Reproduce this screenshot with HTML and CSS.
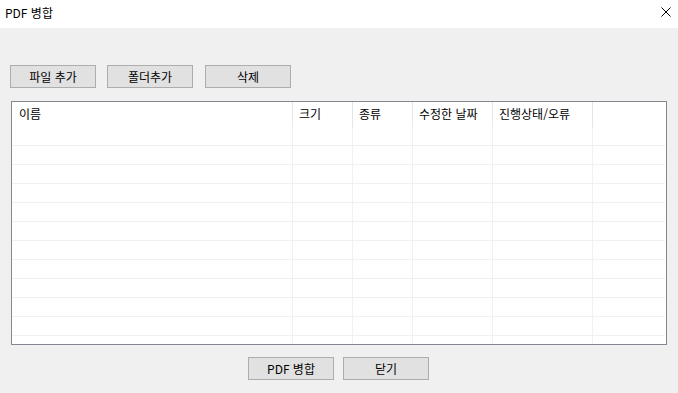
FILE: index.html
```html
<!DOCTYPE html>
<html lang="ko">
<head>
<meta charset="utf-8">
<title>PDF 병합</title>
<link rel="stylesheet" href="styles.css">
</head>
<body>
<div class="window">
  <div class="titlebar">
    <span class="title">PDF 병합</span>
    <span class="close">
      <svg width="10" height="10" viewBox="0 0 10 10"><path d="M0.5 0.5 L9.5 9.5 M9.5 0.5 L0.5 9.5" stroke="#000" stroke-width="1" fill="none"/></svg>
    </span>
  </div>
  <div class="content">
    <div class="toolbar">
      <button class="btn">파일 추가</button>
      <button class="btn">폴더추가</button>
      <button class="btn">삭제</button>
    </div>
    <div class="list">
      <div class="row header">
        <div class="cell c1">이름</div>
        <div class="cell c2">크기</div>
        <div class="cell c3">종류</div>
        <div class="cell c4">수정한 날짜</div>
        <div class="cell c5">진행상태/오류</div>
        <div class="cell c6"></div>
      </div>
      <div class="row"><div class="cell c1"></div><div class="cell c2"></div><div class="cell c3"></div><div class="cell c4"></div><div class="cell c5"></div><div class="cell c6"></div></div>
      <div class="row"><div class="cell c1"></div><div class="cell c2"></div><div class="cell c3"></div><div class="cell c4"></div><div class="cell c5"></div><div class="cell c6"></div></div>
      <div class="row"><div class="cell c1"></div><div class="cell c2"></div><div class="cell c3"></div><div class="cell c4"></div><div class="cell c5"></div><div class="cell c6"></div></div>
      <div class="row"><div class="cell c1"></div><div class="cell c2"></div><div class="cell c3"></div><div class="cell c4"></div><div class="cell c5"></div><div class="cell c6"></div></div>
      <div class="row"><div class="cell c1"></div><div class="cell c2"></div><div class="cell c3"></div><div class="cell c4"></div><div class="cell c5"></div><div class="cell c6"></div></div>
      <div class="row"><div class="cell c1"></div><div class="cell c2"></div><div class="cell c3"></div><div class="cell c4"></div><div class="cell c5"></div><div class="cell c6"></div></div>
      <div class="row"><div class="cell c1"></div><div class="cell c2"></div><div class="cell c3"></div><div class="cell c4"></div><div class="cell c5"></div><div class="cell c6"></div></div>
      <div class="row"><div class="cell c1"></div><div class="cell c2"></div><div class="cell c3"></div><div class="cell c4"></div><div class="cell c5"></div><div class="cell c6"></div></div>
      <div class="row"><div class="cell c1"></div><div class="cell c2"></div><div class="cell c3"></div><div class="cell c4"></div><div class="cell c5"></div><div class="cell c6"></div></div>
      <div class="row"><div class="cell c1"></div><div class="cell c2"></div><div class="cell c3"></div><div class="cell c4"></div><div class="cell c5"></div><div class="cell c6"></div></div>
      <div class="row"><div class="cell c1"></div><div class="cell c2"></div><div class="cell c3"></div><div class="cell c4"></div><div class="cell c5"></div><div class="cell c6"></div></div>
      <div class="row"><div class="cell c1"></div><div class="cell c2"></div><div class="cell c3"></div><div class="cell c4"></div><div class="cell c5"></div><div class="cell c6"></div></div>
    </div>
    <div class="footer">
      <button class="btn">PDF 병합</button>
      <button class="btn">닫기</button>
    </div>
  </div>
</div>
</body>
</html>
```
FILE: styles.css
```css
* { box-sizing: border-box; }
html, body {
  margin: 0;
  padding: 0;
  width: 678px;
  height: 393px;
  overflow: hidden;
  font-family: "Noto Sans CJK KR", "Noto Sans", sans-serif;
  font-size: 12px;
  color: #000;
}
.window {
  width: 678px;
  height: 393px;
  display: flex;
  flex-direction: column;
  background: #f0f0f0;
}
.titlebar {
  height: 28px;
  background: #fff;
  display: flex;
  align-items: center;
  justify-content: space-between;
  padding: 0 7px 2px 5px;
}
.title { font-size: 12px; line-height: 14px; }
.close { display: flex; width: 10px; height: 10px; margin-top: -2px; }
.content {
  flex: 1;
  padding: 37px 0 0 10px;
  display: flex;
  flex-direction: column;
}
.toolbar {
  display: flex;
  height: 23px;
}
.btn {
  width: 86px;
  height: 23px;
  margin: 0;
  padding: 0;
  background: #e1e1e1;
  border: 1px solid #adadad;
  font-family: "Noto Sans CJK KR", "Noto Sans", sans-serif;
  font-size: 12px;
  line-height: 20px;
  color: #000;
}
.toolbar .btn + .btn { margin-left: 11px; }
.toolbar .btn:last-child { margin-left: 12px; }
.list {
  margin: 13px 0 0 1px;
  width: 656px;
  height: 244px;
  border: 1px solid #828790;
  background: #fff;
  overflow: hidden;
  padding-right: 1px;
}
.row {
  display: flex;
  height: 19px;
  border-bottom: 1px solid #f0f0f0;
}
.row.header {
  height: 25px;
  border-bottom: none;
}
.cell {
  border-right: 1px solid #f0f0f0;
  flex: none;
}
.header .cell {
  border-right-color: #e5e5e5;
  line-height: 24px;
  padding-left: 6px;
  white-space: nowrap;
}
.header .c1 { padding-left: 7px; }
.c1 { width: 281px; }
.c2 { width: 60px; }
.c3 { width: 60px; }
.c4 { width: 80px; }
.c5 { width: 100px; }
.c6 { width: 72px; border-right: none; }
.header .c6 { border-right: none; }
.footer {
  display: flex;
  justify-content: center;
  gap: 9px;
  margin: 12px 0 0 -10px;
  padding-right: 1px;
}
```
